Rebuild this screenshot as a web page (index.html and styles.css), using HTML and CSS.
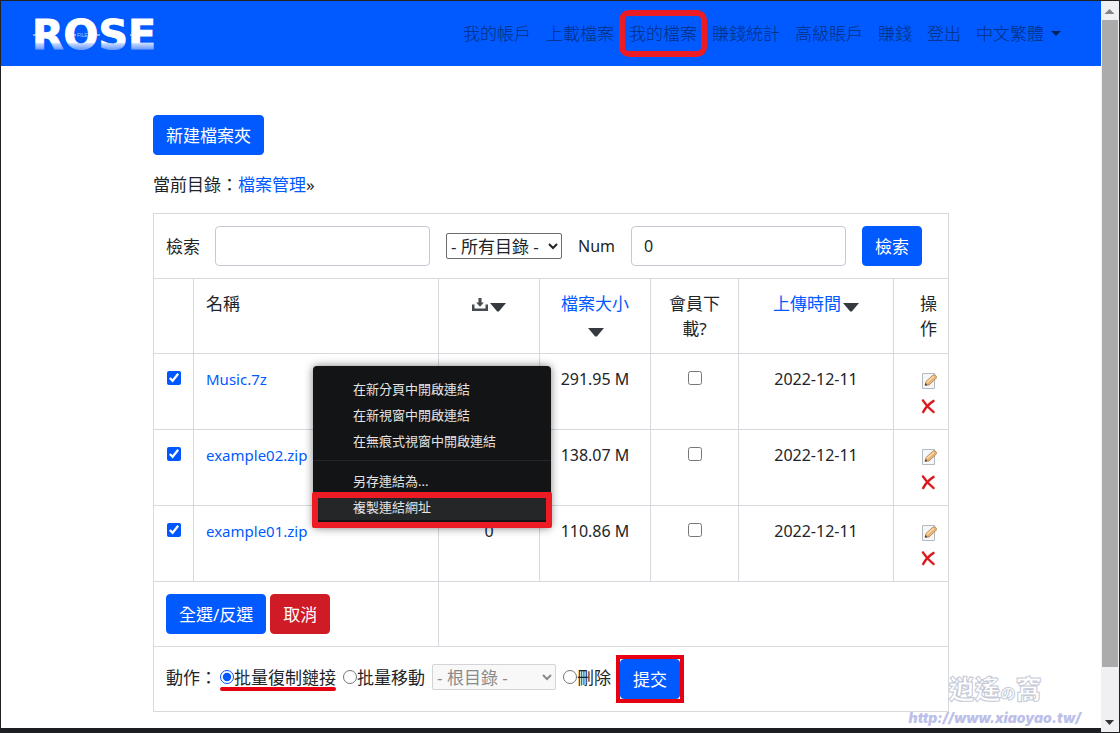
FILE: index.html
```html
<!DOCTYPE html>
<html lang="zh-Hant">
<head>
<meta charset="utf-8">
<meta name="viewport" content="width=device-width, initial-scale=1">
<title>檔案管理</title>
<link rel="stylesheet" href="styles.css">
</head>
<body>
<svg class="sprite" aria-hidden="true">
  <symbol id="i-caret" viewBox="0 0 16 9"><path d="M0 0h16L8.800 8.600h-1.600z" fill="#343a40"/></symbol>
  <symbol id="i-download" viewBox="0 0 16 15"><path d="M6.500 1h3v4.500h2.300L8 9.700 4.200 5.500h2.300zM0 7.500h2.500v4h11v-4H16V14H0z" fill="#454b51"/></symbol>
  <symbol id="i-edit" viewBox="0 0 16 16">
    <path d="M1.500 .5h12v15h-12z" fill="#f5f7fa" stroke="#b4bac2"/>
    <path d="M4 12.500l1-4L11.500 2.500c1.200-1 2.600-.8 3.400.1s.8 2.300-.2 3.200L8 12z" fill="#e9b374" stroke="#b07a45" stroke-width=".8"/>
    <path d="M6 9.300l7-6" stroke="#fbdcb0" stroke-width="1.500"/>
    <path d="M4 12.500l.6-2.300 1.700 1.600z" fill="#30343a"/>
  </symbol>
  <symbol id="i-delete" viewBox="0 0 16 16">
    <path d="M2 1.500c2.500 4 5.500 7.500 10.500 11.500M12.500 2C8.500 4.500 4.500 8.500 2.200 13" fill="none" stroke="#f6cfc6" stroke-width="3.200" stroke-linecap="round"/>
    <path d="M2 1.500c2.500 4 5.500 7.500 10.500 11.500M12.500 2C8.500 4.500 4.500 8.500 2.200 13" fill="none" stroke="#d8151b" stroke-width="2.200" stroke-linecap="round"/>
  </symbol>
</svg>

<div class="window">
  <div class="page">
    <header class="navbar">
      <a class="logo" href="#" aria-label="ROSE">
        <svg width="140" height="48" viewBox="0 0 140 48">
          <defs><linearGradient id="fade" x1="0" y1="8" x2="0" y2="41" gradientUnits="userSpaceOnUse">
            <stop offset="0" stop-color="#fff"/><stop offset=".74" stop-color="#fff"/><stop offset=".78" stop-color="#c4d8ff"/><stop offset=".94" stop-color="#6f9eff"/>
          </linearGradient></defs>
          <text class="logo-text" x="0" y="39" fill="url(#fade)" stroke="url(#fade)">ROSE</text>
          <path d="M1 25h4M33 25h11M57 25h11M98 25h5" stroke="#fff"/>
          <text class="logo-small" x="45" y="27">FILE</text>
        </svg>
      </a>
      <nav class="menu">
        <a href="#">我的帳戶</a>
        <a href="#">上載檔案</a>
        <a href="#" class="marked">我的檔案</a>
        <a href="#">賺錢統計</a>
        <a href="#">高級賬戶</a>
        <a href="#">賺錢</a>
        <a href="#">登出</a>
        <a href="#" class="dropdown">中文繁體</a>
      </nav>
    </header>

    <main class="content">
      <button class="btn" type="button">新建檔案夾</button>
      <p class="crumbs">當前目錄：<a href="#">檔案管理</a>»</p>

      <div class="files">
        <table class="grid">
          <colgroup><col class="c-check"><col class="c-name"><col class="c-down"><col class="c-size"><col class="c-member"><col class="c-date"><col class="c-ops"></colgroup>
          <thead>
            <tr>
              <td colspan="7">
                <form class="search">
                  <label class="first" for="q">檢索</label>
                  <input class="field" id="q" type="text">
                  <select class="pick" aria-label="目錄"><option>- 所有目錄 -</option></select>
                  <label class="latin" for="num">Num</label>
                  <input class="field" id="num" type="text" value="0">
                  <button class="btn" type="button">檢索</button>
                </form>
              </td>
            </tr>
            <tr class="head">
              <th></th>
              <th class="name">名稱</th>
              <th><svg class="down"><use href="#i-download"/></svg><svg class="caret"><use href="#i-caret"/></svg></th>
              <th><a href="#">檔案大小</a><br><svg class="caret"><use href="#i-caret"/></svg></th>
              <th>會員下載?</th>
              <th><a href="#">上傳時間</a><svg class="caret"><use href="#i-caret"/></svg></th>
              <th class="ops">操作</th>
            </tr>
          </thead>
          <tbody>
            <tr>
              <td><input type="checkbox" checked aria-label="Music.7z"></td>
              <td class="name"><a href="#">Music.7z</a></td>
              <td>0</td><td>291.95 M</td>
              <td><input type="checkbox" aria-label="會員下載 Music.7z"></td>
              <td>2022-12-11</td>
              <td class="ops"><div class="tools"><button type="button" aria-label="編輯"><svg><use href="#i-edit"/></svg></button><button type="button" aria-label="刪除"><svg><use href="#i-delete"/></svg></button></div></td>
            </tr>
            <tr>
              <td><input type="checkbox" checked aria-label="example02.zip"></td>
              <td class="name"><a href="#">example02.zip</a></td>
              <td>0</td><td>138.07 M</td>
              <td><input type="checkbox" aria-label="會員下載 example02.zip"></td>
              <td>2022-12-11</td>
              <td class="ops"><div class="tools"><button type="button" aria-label="編輯"><svg><use href="#i-edit"/></svg></button><button type="button" aria-label="刪除"><svg><use href="#i-delete"/></svg></button></div></td>
            </tr>
            <tr>
              <td><input type="checkbox" checked aria-label="example01.zip"></td>
              <td class="name"><a href="#">example01.zip</a></td>
              <td>0</td><td>110.86 M</td>
              <td><input type="checkbox" aria-label="會員下載 example01.zip"></td>
              <td>2022-12-11</td>
              <td class="ops"><div class="tools"><button type="button" aria-label="編輯"><svg><use href="#i-edit"/></svg></button><button type="button" aria-label="刪除"><svg><use href="#i-delete"/></svg></button></div></td>
            </tr>
          </tbody>
          <tfoot>
            <tr>
              <td colspan="2"><div class="bulk"><button class="btn" type="button">全選/反選</button><button class="btn danger" type="button">取消</button></div></td>
              <td colspan="5"></td>
            </tr>
            <tr>
              <td colspan="7">
                <form class="actions">
                  <span class="caption">動作：</span>
                  <label class="underlined"><input type="radio" name="act" checked>批量復制鏈接</label>
                  <label><input type="radio" name="act">批量移動</label>
                  <select class="pick root" disabled aria-label="根目錄"><option>- 根目錄 -</option></select>
                  <label><input type="radio" name="act">刪除</label>
                  <span class="submit"><button class="btn" type="button">提交</button></span>
                </form>
              </td>
            </tr>
          </tfoot>
        </table>

        <div class="context" role="menu">
          <button type="button" role="menuitem">在新分頁中開啟連結</button>
          <button type="button" role="menuitem">在新視窗中開啟連結</button>
          <button type="button" role="menuitem">在無痕式視窗中開啟連結</button>
          <hr>
          <button type="button" role="menuitem">另存連結為...</button>
          <button type="button" role="menuitem" class="chosen">複製連結網址</button>
        </div>
      </div>
    </main>
    <div class="watermark"><span class="wm-name">逍遙<small>の</small>窩</span><span class="wm-url">http://www.xiaoyao.tw/</span></div>
  </div>
  <div class="scrollbar" aria-hidden="true">
    <svg width="17" height="19" viewBox="0 0 17 19"><path d="M3.500 13h10l-5-5z" fill="#858585"/></svg>
    <div class="thumb"></div>
    <div class="track"></div>
    <svg width="17" height="19" viewBox="0 0 17 19"><path d="M4 7h9l-4.500 5z" fill="#333"/></svg>
  </div>
</div>
</body>
</html>
```
FILE: styles.css
```css
* { box-sizing: border-box; }

body {
  margin: 0;
  background: #fff;
  color: #212529;
  font: 17px/25px "Noto Sans", "Noto Sans CJK TC", sans-serif;
}
a { color: #005aff; text-decoration: none; }
button, input, select { font: inherit; color: inherit; }
.sprite { display: none; }

.window {
  display: flex;
  min-height: 100vh;
  border: 1px solid #202124;
}
.page {
  position: relative;
  flex: 1;
  min-width: 0;
  border-bottom: 4px solid #1b1f23;
}

.navbar {
  display: flex;
  align-items: center;
  justify-content: space-between;
  min-height: 65px;
  padding: 0 40px 0 31px;
  background: #005aff;
  font-weight: 300;
}
.logo { display: flex; }
.logo-text { font: bold 41px "DejaVu Sans", sans-serif; stroke-width: 1px; }
.logo-small { font: 5px "Liberation Sans", sans-serif; fill: #b8d0ff; }
.menu { display: flex; align-items: center; gap: 15px; }
.menu a { position: relative; color: #022f80; }
.marked::after {
  content: "";
  position: absolute;
  inset: -11px -10px;
  border: 6px solid #ed1c24;
  border-radius: 10px;
}
.dropdown { display: flex; align-items: center; gap: 7px; }
.dropdown::after {
  content: "";
  border: 5px solid transparent;
  border-top-color: #022458;
  border-bottom: 0;
}

.content {
  max-width: 796px;
  margin: 0 auto;
  padding: 49px 0 16px;
}
.btn {
  display: block;
  height: 40px;
  padding: 0 12px;
  border: 1px solid #005aff;
  border-radius: 4px;
  background: #005aff;
  color: #fff;
  white-space: nowrap;
}
.danger { background: #cf1b26; border-color: #cf1b26; }
.crumbs { margin: 17px 0 16px; }

.files { position: relative; }
.grid {
  width: 100%;
  table-layout: fixed;
  border-collapse: collapse;
}
.grid th, .grid td {
  padding: 12px;
  border: 1px solid #d6d9de;
  text-align: center;
  vertical-align: top;
  font-weight: 400;
}
.c-check { width: 40px; }
.c-name { width: 245px; }
.c-down { width: 101px; }
.c-size { width: 111px; }
.c-member { width: 88px; }
.c-date { width: 155px; }
.grid tbody { font-size: 16px; }
.grid tbody tr { height: 76px; }
.grid tbody td { padding: 13px 8px 12px; }
.grid tbody td:first-child { padding: 13px 12px; }
.grid .name, .grid tbody .name { padding-left: 12px; text-align: left; }
.grid tbody .name { font-size: 15px; }
.grid .ops, .grid tbody .ops { padding-left: 26px; padding-right: 11px; }
.caret { width: 16px; height: 9px; margin-left: 2px; vertical-align: -2px; }
.down { width: 16px; height: 15px; vertical-align: -2px; }

input[type="checkbox"], input[type="radio"] {
  width: 14px;
  height: 14px;
  margin: 0;
  accent-color: #0057ff;
}
.tools { display: grid; gap: 10px; padding-top: 6px; justify-content: center; }
.tools button {
  display: block;
  width: 16px;
  height: 16px;
  padding: 0;
  border: 0;
  background: none;
}
.tools svg { display: block; width: 16px; height: 16px; }

.search { display: flex; align-items: center; gap: 16px; }
.search .first { width: 33px; white-space: nowrap; }
.field {
  flex: 0 1 215px;
  min-width: 0;
  height: 40px;
  padding: 0 12px;
  border: 1px solid #c6c9d3;
  border-radius: 4px;
  background: #fff;
  font-size: 16px;
}
.latin { font-size: 16px; }
.pick {
  width: 116px;
  height: 26px;
  padding: 0;
  border: 1px solid #6b6b6b;
  border-radius: 2px;
  background: #fff;
}
.root {
  width: 124px;
  border-color: #d4d4d8;
  background: #f8f8f8;
  color: #8a8a8a;
  opacity: 1;
}

.bulk { display: flex; gap: 4px; }
.actions { display: flex; align-items: center; gap: 7px; white-space: nowrap; }
.actions > :not(.submit) { margin-bottom: 4px; }
.actions .caption { margin-right: -4px; }
.actions label { position: relative; display: flex; align-items: center; }
.underlined::after {
  content: "";
  position: absolute;
  left: 0;
  right: 0;
  top: 22px;
  height: 4px;
  border-radius: 2px;
  background: #e60012;
}
.submit { margin-left: 2px; outline: 4px solid #e60012; }

.context {
  position: absolute;
  left: 160px;
  top: 153px;
  width: 238px;
  padding: 10px 0 8px;
  border-radius: 4px;
  background: #131416;
  box-shadow: 0 0 8px rgba(0, 0, 0, .5);
  color: #e4e4e4;
  font-size: 13px;
}
.context button {
  display: block;
  position: relative;
  width: 100%;
  height: 26px;
  padding: 0 0 0 40px;
  border: 0;
  background: none;
  text-align: left;
}
.context hr { margin: 6px 0 7px; border: 0; border-top: 1px solid #242528; }
.context .chosen { background: #252628; }
.chosen::after {
  content: "";
  position: absolute;
  inset: -2px -1px -8px;
  border: 6px solid #ed1c24;
  border-radius: 2px;
}

.watermark {
  position: absolute;
  right: 20px;
  bottom: 2px;
  display: grid;
  white-space: nowrap;
}
.wm-name {
  padding-left: 40px;
  color: #fff;
  font: 900 26px/32px "Noto Sans CJK TC", sans-serif;
  -webkit-text-stroke: 1px #c6cad8;
}
.wm-name small { font-size: 15px; }
.wm-url { color: #bcbfea; font: italic 900 14px/17px Inter, sans-serif; }

.scrollbar {
  display: flex;
  flex-direction: column;
  width: 18px;
  background: #f0f0f2;
}
.scrollbar svg { flex: none; }
.thumb { flex: 647; margin: 0 1px; background: #ababab; }
.track { flex: 46; }
```
